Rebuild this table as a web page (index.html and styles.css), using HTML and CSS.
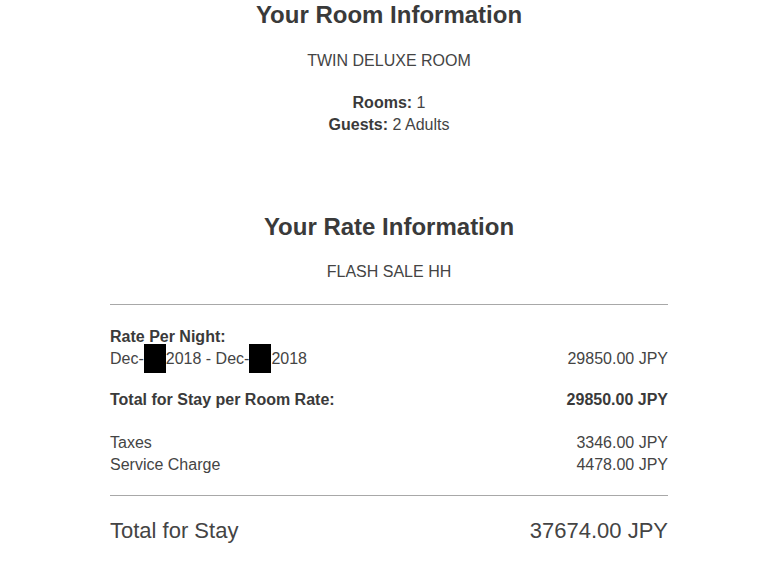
FILE: index.html
```html
<!DOCTYPE html>
<html>
<head>
<meta charset="utf-8">
<link rel="stylesheet" href="styles.css">
</head>
<body>
<div class="wrap">
  <section class="room">
    <h2 class="title">Your Room Information</h2>
    <p class="type">TWIN DELUXE ROOM</p>
    <div class="details">
      <div><b>Rooms:</b> 1</div>
      <div><b>Guests:</b> 2 Adults</div>
    </div>
  </section>
  <section class="rate">
    <h2 class="title">Your Rate Information</h2>
    <p class="type type-rate">FLASH SALE HH</p>
    <hr class="rule rule-top">
    <div class="block block-night">
      <div class="label-bold">Rate Per Night:</div>
      <div class="row">
        <span>Dec-<span class="redact"></span>2018 - Dec-<span class="redact"></span>2018</span>
        <span>29850.00 JPY</span>
      </div>
    </div>
    <div class="block block-sub row bold">
      <span>Total for Stay per Room Rate:</span>
      <span>29850.00 JPY</span>
    </div>
    <div class="block block-fees">
      <div class="row"><span>Taxes</span><span>3346.00 JPY</span></div>
      <div class="row"><span>Service Charge</span><span>4478.00 JPY</span></div>
    </div>
    <hr class="rule rule-bottom">
    <div class="row total">
      <span>Total for Stay</span>
      <span>37674.00 JPY</span>
    </div>
  </section>
</div>
</body>
</html>
```
FILE: styles.css
```css
html, body {
  margin: 0;
  padding: 0;
  background: #ffffff;
}
body {
  font-family: "Liberation Sans", Arial, sans-serif;
  font-size: 16px;
  line-height: 22px;
  color: #444444;
}
.wrap {
  width: 558px;
  margin-left: 110px;
}
.title {
  margin: 0;
  font-size: 24px;
  line-height: 30px;
  font-weight: bold;
  color: #3a3a3a;
  text-align: center;
}
.type {
  margin: 20px 0 0;
  text-align: center;
}
.type-rate {
  margin-top: 19px;
}
.details {
  margin-top: 20px;
  text-align: center;
}
.details b {
  color: #3a3a3a;
}
.rate {
  margin-top: 76px;
}
.rule {
  border: 0;
  height: 1px;
  background: #a8a8a8;
  margin: 0;
}
.rule-top {
  margin-top: 21px;
}
.rule-bottom {
  margin-top: 19px;
}
.block-night {
  margin-top: 21px;
}
.block-sub {
  margin-top: 19px;
}
.block-fees {
  margin-top: 21px;
}
.label-bold {
  font-weight: bold;
  color: #3a3a3a;
}
.row {
  display: flex;
  justify-content: space-between;
}
.bold {
  font-weight: bold;
  color: #3a3a3a;
}
.redact {
  display: inline-block;
  width: 22px;
  height: 22px;
  vertical-align: top;
  background: #000;
  box-shadow: 0 -4px 0 #000, 0 3px 0 #000;
}
.total {
  margin-top: 20px;
  font-size: 22px;
  line-height: 30px;
}
```
